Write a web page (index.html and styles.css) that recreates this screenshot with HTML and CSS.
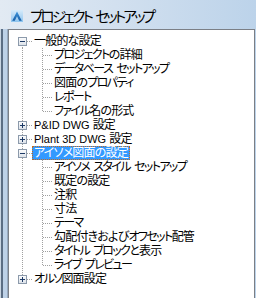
FILE: index.html
```html
<!DOCTYPE html>
<html lang="ja">
<head>
<meta charset="utf-8">
<link rel="stylesheet" href="styles.css">
</head>
<body>
<div class="window">
  <div class="titlebar">
    <svg class="appicon" width="12" height="12" viewBox="0 0 12 12">
      <defs>
        <linearGradient id="tile" x1="0" y1="0" x2="0" y2="1">
          <stop offset="0" stop-color="#d6ebfa"/>
          <stop offset="1" stop-color="#8ec4ee"/>
        </linearGradient>
        <linearGradient id="ag" x1="0" y1="0" x2="0" y2="1">
          <stop offset="0" stop-color="#3d95dc"/>
          <stop offset="1" stop-color="#155ea8"/>
        </linearGradient>
      </defs>
      <rect width="12" height="12" fill="url(#tile)"/>
      <path d="M6 1.5 L10.8 10.8 H8.2 L6 6.2 L3.8 10.8 H1.2 Z" fill="url(#ag)"/>
    </svg>
    <span class="title">プロジェクト セットアップ</span>
  </div>
  <div class="main">
    <div class="frame-left"></div>
    <div class="panel">
      <div class="tree">
        <div class="row"><span class="c exp first"><svg class="box" viewBox="0 0 9 9"><rect x="0.5" y="0.5" width="8" height="8"/><path d="M2 4.5h5"/></svg></span><span class="label">一般的な設定</span></div>
        <div class="row"><span class="c pipe"></span><span class="c tee"></span><span class="label"><span class="k">プロジェクト</span>の詳細</span></div>
        <div class="row"><span class="c pipe"></span><span class="c tee"></span><span class="label"><span class="k">データベース セットアップ</span></span></div>
        <div class="row"><span class="c pipe"></span><span class="c tee"></span><span class="label">図面の<span class="k">プロパティ</span></span></div>
        <div class="row"><span class="c pipe"></span><span class="c tee"></span><span class="label"><span class="k">レポート</span></span></div>
        <div class="row"><span class="c pipe"></span><span class="c elbow"></span><span class="label"><span class="k">ファイル</span>名の形式</span></div>
        <div class="row"><span class="c exp mid"><svg class="box" viewBox="0 0 9 9"><rect x="0.5" y="0.5" width="8" height="8"/><path d="M2 4.5h5M4.5 2v5"/></svg></span><span class="label"><span class="latin">P&amp;ID DWG </span>設定</span></div>
        <div class="row"><span class="c exp mid"><svg class="box" viewBox="0 0 9 9"><rect x="0.5" y="0.5" width="8" height="8"/><path d="M2 4.5h5M4.5 2v5"/></svg></span><span class="label"><span class="latin">Plant 3D DWG </span>設定</span></div>
        <div class="row"><span class="c exp mid"><svg class="box" viewBox="0 0 9 9"><rect x="0.5" y="0.5" width="8" height="8"/><path d="M2 4.5h5"/></svg></span><span class="label selected">アイソメ図面の設定</span></div>
        <div class="row"><span class="c pipe"></span><span class="c tee"></span><span class="label"><span class="k">アイソメ スタイル セットアップ</span></span></div>
        <div class="row"><span class="c pipe"></span><span class="c tee"></span><span class="label">既定の設定</span></div>
        <div class="row"><span class="c pipe"></span><span class="c tee"></span><span class="label">注釈</span></div>
        <div class="row"><span class="c pipe"></span><span class="c tee"></span><span class="label">寸法</span></div>
        <div class="row"><span class="c pipe"></span><span class="c tee"></span><span class="label"><span class="k">テーマ</span></span></div>
        <div class="row"><span class="c pipe"></span><span class="c tee"></span><span class="label">勾配付きおよび<span class="k">オフセット</span>配管</span></div>
        <div class="row"><span class="c pipe"></span><span class="c tee"></span><span class="label"><span class="k">タイトル ブロック</span>と表示</span></div>
        <div class="row"><span class="c pipe"></span><span class="c elbow"></span><span class="label"><span class="k">ライブ プレビュー</span></span></div>
        <div class="row"><span class="c exp last"><svg class="box" viewBox="0 0 9 9"><rect x="0.5" y="0.5" width="8" height="8"/><path d="M2 4.5h5M4.5 2v5"/></svg></span><span class="label"><span class="k">オルソ</span>図面設定</span></div>
      </div>
    </div>
  </div>
</div>
</body>
</html>
```

FILE: styles.css
```css
* { box-sizing: border-box; }

html, body {
  margin: 0;
  width: 256px;
  height: 298px;
  overflow: hidden;
}

body {
  font-family: "Noto Sans CJK JP", "Noto Sans", sans-serif;
  font-feature-settings: "palt";
}

.window {
  height: 298px;
  display: flex;
  flex-direction: column;
  background: linear-gradient(to right, #e2eaf3 0%, #d2e0ef 45%, #bcd3ea 100%);
}

.titlebar {
  height: 29px;
  flex: none;
  display: flex;
  align-items: flex-start;
  padding: 10px 0 0 11px;
  gap: 7px;
}

.appicon {
  display: block;
  flex: none;
}

.title {
  font-size: 14.5px;
  line-height: 14px;
  letter-spacing: -2.8px;
  word-spacing: 4px;
  color: #000;
  margin-top: -1px;
  white-space: nowrap;
}

.main {
  flex: 1;
  display: flex;
  min-height: 0;
}

.frame-left {
  width: 8px;
  flex: none;
  background: linear-gradient(to right,
    #c9d5e2 0 1px,
    #5b6d83 1px 3px,
    #bdd1e7 3px 7px,
    #97a9bf 7px 8px);
}

.panel {
  flex: 1;
  margin-right: 1px;
  background: #fff;
  border: 1px solid #7b7f86;
  border-bottom: none;
  padding: 4px 0 0 3px;
}

.row {
  display: flex;
  height: 14px;
  align-items: flex-start;
}

.c {
  width: 20px;
  height: 14px;
  flex: none;
  display: flex;
  align-items: flex-start;
  background-repeat: no-repeat;
}

.pipe {
  background-image: repeating-linear-gradient(to bottom, #a0a0a0 0 1px, transparent 1px 2px);
  background-size: 1px 14px;
  background-position: 10px 0;
}

.tee {
  background-image:
    repeating-linear-gradient(to bottom, #a0a0a0 0 1px, transparent 1px 2px),
    repeating-linear-gradient(to right, #a0a0a0 0 1px, transparent 1px 2px);
  background-size: 1px 14px, 9px 1px;
  background-position: 10px 0, 11px 7px;
}

.elbow {
  background-image:
    repeating-linear-gradient(to bottom, #a0a0a0 0 1px, transparent 1px 2px),
    repeating-linear-gradient(to right, #a0a0a0 0 1px, transparent 1px 2px);
  background-size: 1px 8px, 9px 1px;
  background-position: 10px 0, 11px 7px;
}

.exp.first {
  background-image:
    repeating-linear-gradient(to bottom, #a0a0a0 0 1px, transparent 1px 2px),
    repeating-linear-gradient(to right, #a0a0a0 0 1px, transparent 1px 2px);
  background-size: 1px 7px, 9px 1px;
  background-position: 10px 7px, 11px 7px;
}

.exp.mid {
  background-image:
    repeating-linear-gradient(to bottom, #a0a0a0 0 1px, transparent 1px 2px),
    repeating-linear-gradient(to right, #a0a0a0 0 1px, transparent 1px 2px);
  background-size: 1px 14px, 9px 1px;
  background-position: 10px 0, 11px 7px;
}

.exp.last {
  background-image:
    repeating-linear-gradient(to bottom, #a0a0a0 0 1px, transparent 1px 2px),
    repeating-linear-gradient(to right, #a0a0a0 0 1px, transparent 1px 2px);
  background-size: 1px 7px, 9px 1px;
  background-position: 10px 0, 11px 7px;
}

.box {
  width: 9px;
  height: 9px;
  margin: 3px 0 0 6px;
  display: block;
  background: linear-gradient(to bottom, #ffffff, #d9dfe7);
}

.box rect {
  fill: none;
  stroke: #8c9aab;
}

.box path {
  stroke: #1d3a66;
  stroke-width: 1;
  fill: none;
}

.label {
  font-size: 12px;
  line-height: 10px;
  height: 14px;
  padding: 0 1px;
  border: 1px dotted transparent;
  color: #000;
  letter-spacing: -0.8px;
  word-spacing: 3px;
  white-space: nowrap;
}

.k {
  letter-spacing: -1.6px;
}

.latin {
  font-family: "Liberation Sans", sans-serif;
  font-size: 11px;
  letter-spacing: 0;
  word-spacing: 0;
}

.label.selected {
  background: #3399ff;
  color: #fff;
  border-color: #c46a1e;
}
```
